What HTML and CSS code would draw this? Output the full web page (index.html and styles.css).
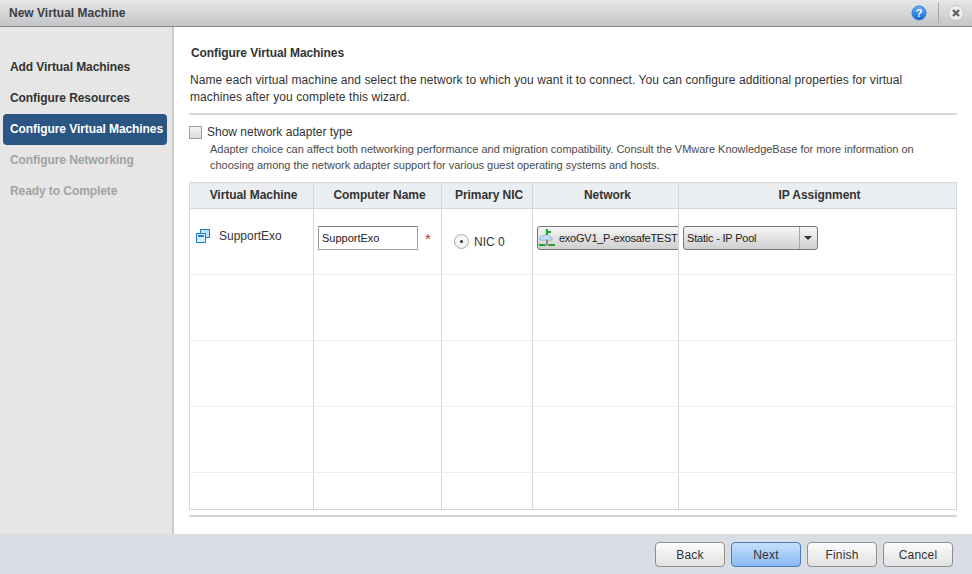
FILE: index.html
```html
<!DOCTYPE html>
<html lang="en">
<head>
  <meta charset="UTF-8">
  <title>New Virtual Machine</title>
  <link rel="stylesheet" href="styles.css">
</head>
<body>

<div class="dialog">
  <div class="titlebar">
    <span class="title">New Virtual Machine</span>
    <svg class="help-icon" width="16" height="16" viewBox="0 0 16 16">
      <defs>
        <linearGradient id="helpFill" x1="0" y1="0" x2="0" y2="1">
          <stop offset="0" stop-color="#6ab2f5"/>
          <stop offset="1" stop-color="#1263d6"/>
        </linearGradient>
      </defs>
      <circle cx="8" cy="8" r="7" fill="url(#helpFill)" stroke="#2f7fd8"/>
      <text x="8" y="12" text-anchor="middle" class="help-mark">?</text>
    </svg>
    <span class="title-sep"></span>
    <svg class="close-icon" width="16" height="16" viewBox="0 0 16 16">
      <circle cx="8" cy="8" r="7.5" fill="#eeeeee" stroke="#c4c4c4"/>
      <path d="M5 5l6 6M11 5l-6 6" stroke="#606060" stroke-width="2.2" fill="none"/>
    </svg>
  </div>

  <div class="main">
    <div class="sidebar">
      <div class="step">Add Virtual Machines</div>
      <div class="step">Configure Resources</div>
      <div class="step active">Configure Virtual Machines</div>
      <div class="step disabled">Configure Networking</div>
      <div class="step disabled">Ready to Complete</div>
    </div>

    <div class="content">
      <h2 class="heading">Configure Virtual Machines</h2>
      <p class="intro">Name each virtual machine and select the network to which you want it to connect. You can configure additional properties for virtual machines after you complete this wizard.</p>

      <div class="adapter">
        <div class="adapter-check">
          <span class="checkbox"></span>
          <span>Show network adapter type</span>
        </div>
        <p class="adapter-note">Adapter choice can affect both networking performance and migration compatibility. Consult the VMware KnowledgeBase for more information on choosing among the network adapter support for various guest operating systems and hosts.</p>
      </div>

      <table class="vm-table">
        <colgroup>
          <col class="col-vm">
          <col class="col-name">
          <col class="col-nic">
          <col class="col-net">
          <col class="col-ip">
        </colgroup>
        <thead>
          <tr>
            <th>Virtual Machine</th>
            <th>Computer Name</th>
            <th>Primary NIC</th>
            <th>Network</th>
            <th>IP Assignment</th>
          </tr>
        </thead>
        <tbody>
          <tr class="first-row">
            <td>
              <div class="vm-cell">
                <svg width="14" height="14" viewBox="0 0 14 14">
                  <rect x="4.5" y="0.5" width="9" height="8" fill="#bfe0f7" stroke="#1f7fc4"/>
                  <rect x="0.5" y="4.5" width="9" height="9" fill="#d9eefb" stroke="#1f7fc4"/>
                  <rect x="2" y="6" width="6" height="2" fill="#1f7fc4"/>
                </svg>
                <span>SupportExo</span>
              </div>
            </td>
            <td>
              <div class="name-cell">
                <span class="name-input">SupportExo</span>
                <span class="required">*</span>
              </div>
            </td>
            <td>
              <div class="nic-cell">
                <span class="radio"></span>
                <span>NIC 0</span>
              </div>
            </td>
            <td class="net-td">
              <div class="net-select">
                <svg width="18" height="18" viewBox="0 0 18 18">
                  <path d="M1 11c-1-3 2-5 4-4 1-2 5-2 6 1 2 0 3 2 2 3z" fill="#c6def0" stroke="#8db4d0"/>
                  <rect x="7" y="0" width="2" height="6" fill="#12a92b"/>
                  <rect x="9" y="2" width="3" height="2" fill="#12a92b"/>
                  <rect x="7" y="11" width="2" height="4" fill="#8a8a8a"/>
                  <rect x="0" y="15" width="6" height="2" fill="#12a92b"/>
                  <rect x="6" y="15" width="4" height="2" fill="#9a9a9a"/>
                  <rect x="10" y="15" width="6" height="2" fill="#12a92b"/>
                </svg>
                <span>exoGV1_P-exosafeTEST</span>
              </div>
            </td>
            <td>
              <div class="ip-select">
                <span class="ip-label">Static - IP Pool</span>
                <span class="ip-arrow"></span>
              </div>
            </td>
          </tr>
          <tr><td></td><td></td><td></td><td></td><td></td></tr>
          <tr><td></td><td></td><td></td><td></td><td></td></tr>
          <tr><td></td><td></td><td></td><td></td><td></td></tr>
          <tr class="last-row"><td></td><td></td><td></td><td></td><td></td></tr>
        </tbody>
      </table>
      <div class="table-rule"></div>
    </div>
  </div>

  <div class="footer">
    <button class="btn">Back</button>
    <button class="btn primary">Next</button>
    <button class="btn">Finish</button>
    <button class="btn">Cancel</button>
  </div>
</div>

</body>
</html>
```

FILE: styles.css
```css
* {
  box-sizing: border-box;
}

html, body {
  margin: 0;
  height: 100%;
}

body {
  font-family: "Liberation Sans", Arial, sans-serif;
  font-size: 12px;
  color: #333;
  background: #fff;
  overflow: hidden;
}

.dialog {
  display: flex;
  flex-direction: column;
  height: 574px;
}

/* Title bar */
.titlebar {
  display: flex;
  align-items: center;
  height: 27px;
  flex: none;
  padding: 0 8px 1px 9px;
  background: linear-gradient(#e6e7e9, #c3c4c6);
  border-bottom: 1px solid #85878a;
}

.title {
  flex: 1;
  font-weight: bold;
  color: #3d3d40;
}

.title-sep {
  width: 1px;
  height: 20px;
  margin: 0 9px 0 11px;
  background: #a5a6a8;
}

.help-mark {
  fill: #fff;
  font-size: 11px;
  font-weight: bold;
  font-family: "Liberation Sans", sans-serif;
}

/* Wizard steps */
.main {
  display: flex;
  flex: 1;
  min-height: 0;
}

.sidebar {
  flex: none;
  width: 174px;
  padding: 25px 5px 0 3px;
  background: #e6e6e6;
  border-right: 2px solid #cbcbcb;
}

.step {
  height: 31px;
  line-height: 31px;
  padding-left: 7px;
  font-weight: bold;
  letter-spacing: -0.08px;
  color: #333;
  white-space: nowrap;
}

.step.active {
  color: #fff;
  background: #2b5582;
  border-radius: 4px;
}

.step.disabled {
  color: #a2a2a2;
}

/* Main panel */
.content {
  flex: 1;
  padding: 19px 15px 0 15px;
}

.heading {
  margin: 0 0 0 2px;
  font-size: 12px;
  line-height: 15px;
  font-weight: bold;
  letter-spacing: -0.08px;
  color: #333;
}

.intro {
  margin: 11px 0 0 0;
  padding: 0 40px 6px 1px;
  height: 43px;
  line-height: 17px;
  letter-spacing: 0.08px;
  border-bottom: 2px solid #d4dadb;
  color: #333;
}

.adapter {
  margin-top: 9px;
  height: 58px;
}

.adapter-check {
  display: flex;
  align-items: center;
  gap: 5px;
  height: 16px;
}

.checkbox {
  width: 13px;
  height: 13px;
  background: linear-gradient(#f4f4f4, #dcdcdc);
  border: 1px solid #9c9c9c;
}

.adapter-note {
  margin: 1px 0 0 21px;
  font-size: 11px;
  line-height: 16px;
  letter-spacing: -0.02px;
  color: #4a4a4a;
}

/* VM table */
.vm-table {
  width: 768px;
  table-layout: fixed;
  border-collapse: collapse;
  border: 1px solid #d6d6d6;
}

.col-vm { width: 124px; }
.col-name { width: 128px; }
.col-nic { width: 91px; }
.col-net { width: 146px; }

.vm-table th {
  height: 26px;
  padding: 0 0 2px 4px;
  font-size: 12px;
  font-weight: bold;
  letter-spacing: -0.05px;
  color: #333;
  background: #eaeef1;
  border: 1px solid #d6d6d6;
}

.vm-table td {
  height: 66px;
  padding: 0;
  vertical-align: top;
  border-left: 1px solid #d6d6d6;
  border-right: 1px solid #d6d6d6;
  border-bottom: 1px solid #ececec;
}

.vm-table .last-row td {
  height: 37px;
  border-bottom-color: #d6d6d6;
}

.vm-cell {
  display: flex;
  align-items: center;
  gap: 9px;
  padding: 20px 0 0 6px;
}

.name-cell {
  display: flex;
  align-items: center;
  padding: 17px 0 0 4px;
}

.name-input {
  width: 100px;
  height: 24px;
  line-height: 22px;
  padding-left: 3px;
  font-size: 11px;
  color: #222;
  background: #fff;
  border: 1px solid #a0a0a0;
  border-top-color: #808080;
}

.required {
  margin-left: 7px;
  font-size: 15px;
  line-height: 15px;
  color: #d0342c;
}

.nic-cell {
  display: flex;
  align-items: center;
  gap: 5px;
  padding: 25px 0 0 12px;
}

.radio {
  position: relative;
  width: 15px;
  height: 15px;
  border-radius: 50%;
  background: #f4f4f4;
  border: 1px solid #a8a8a8;
}

.radio::after {
  content: "";
  position: absolute;
  left: 5px;
  top: 5px;
  width: 3px;
  height: 3px;
  border-radius: 50%;
  background: #333;
}

.net-td {
  overflow: hidden;
}

.net-select {
  display: flex;
  align-items: center;
  gap: 2px;
  width: 170px;
  height: 24px;
  margin: 17px 0 0 4px;
  padding-left: 1px;
  font-size: 11px;
  letter-spacing: -0.25px;
  white-space: nowrap;
  color: #222;
  background: linear-gradient(#f6f6f6, #cfcfcf);
  border: 1px solid #777;
  border-radius: 3px;
}

.ip-select {
  display: flex;
  align-items: center;
  width: 135px;
  height: 24px;
  margin: 17px 0 0 4px;
  font-size: 11px;
  letter-spacing: -0.2px;
  color: #222;
  background: linear-gradient(#f6f6f6, #cfcfcf);
  border: 1px solid #777;
  border-radius: 3px;
}

.ip-label {
  flex: 1;
  padding-left: 3px;
  white-space: nowrap;
}

.ip-arrow {
  position: relative;
  width: 18px;
  height: 22px;
  border-left: 1px solid #a8a8a8;
}

.ip-arrow::after {
  content: "";
  position: absolute;
  left: 4px;
  top: 9px;
  border-left: 4px solid transparent;
  border-right: 4px solid transparent;
  border-top: 4px solid #333;
}

.table-rule {
  width: 768px;
  height: 2px;
  margin-top: 5px;
  background: #d0d5d6;
}

/* Footer */
.footer {
  display: flex;
  flex: none;
  justify-content: flex-end;
  align-items: flex-start;
  gap: 6px;
  height: 40px;
  padding: 8px 19px 0 0;
  background: #d9dde4;
}

.btn {
  width: 70px;
  height: 25px;
  padding: 0;
  font-family: inherit;
  font-size: 12px;
  letter-spacing: 0.2px;
  color: #333;
  background: linear-gradient(#fbfbfb, #e2e2e2);
  border: 1px solid #8f8f8f;
  border-radius: 4px;
}

.btn.primary {
  background: linear-gradient(#c4e0fd, #8ab9f2);
  border-color: #4a7db5;
}
```
